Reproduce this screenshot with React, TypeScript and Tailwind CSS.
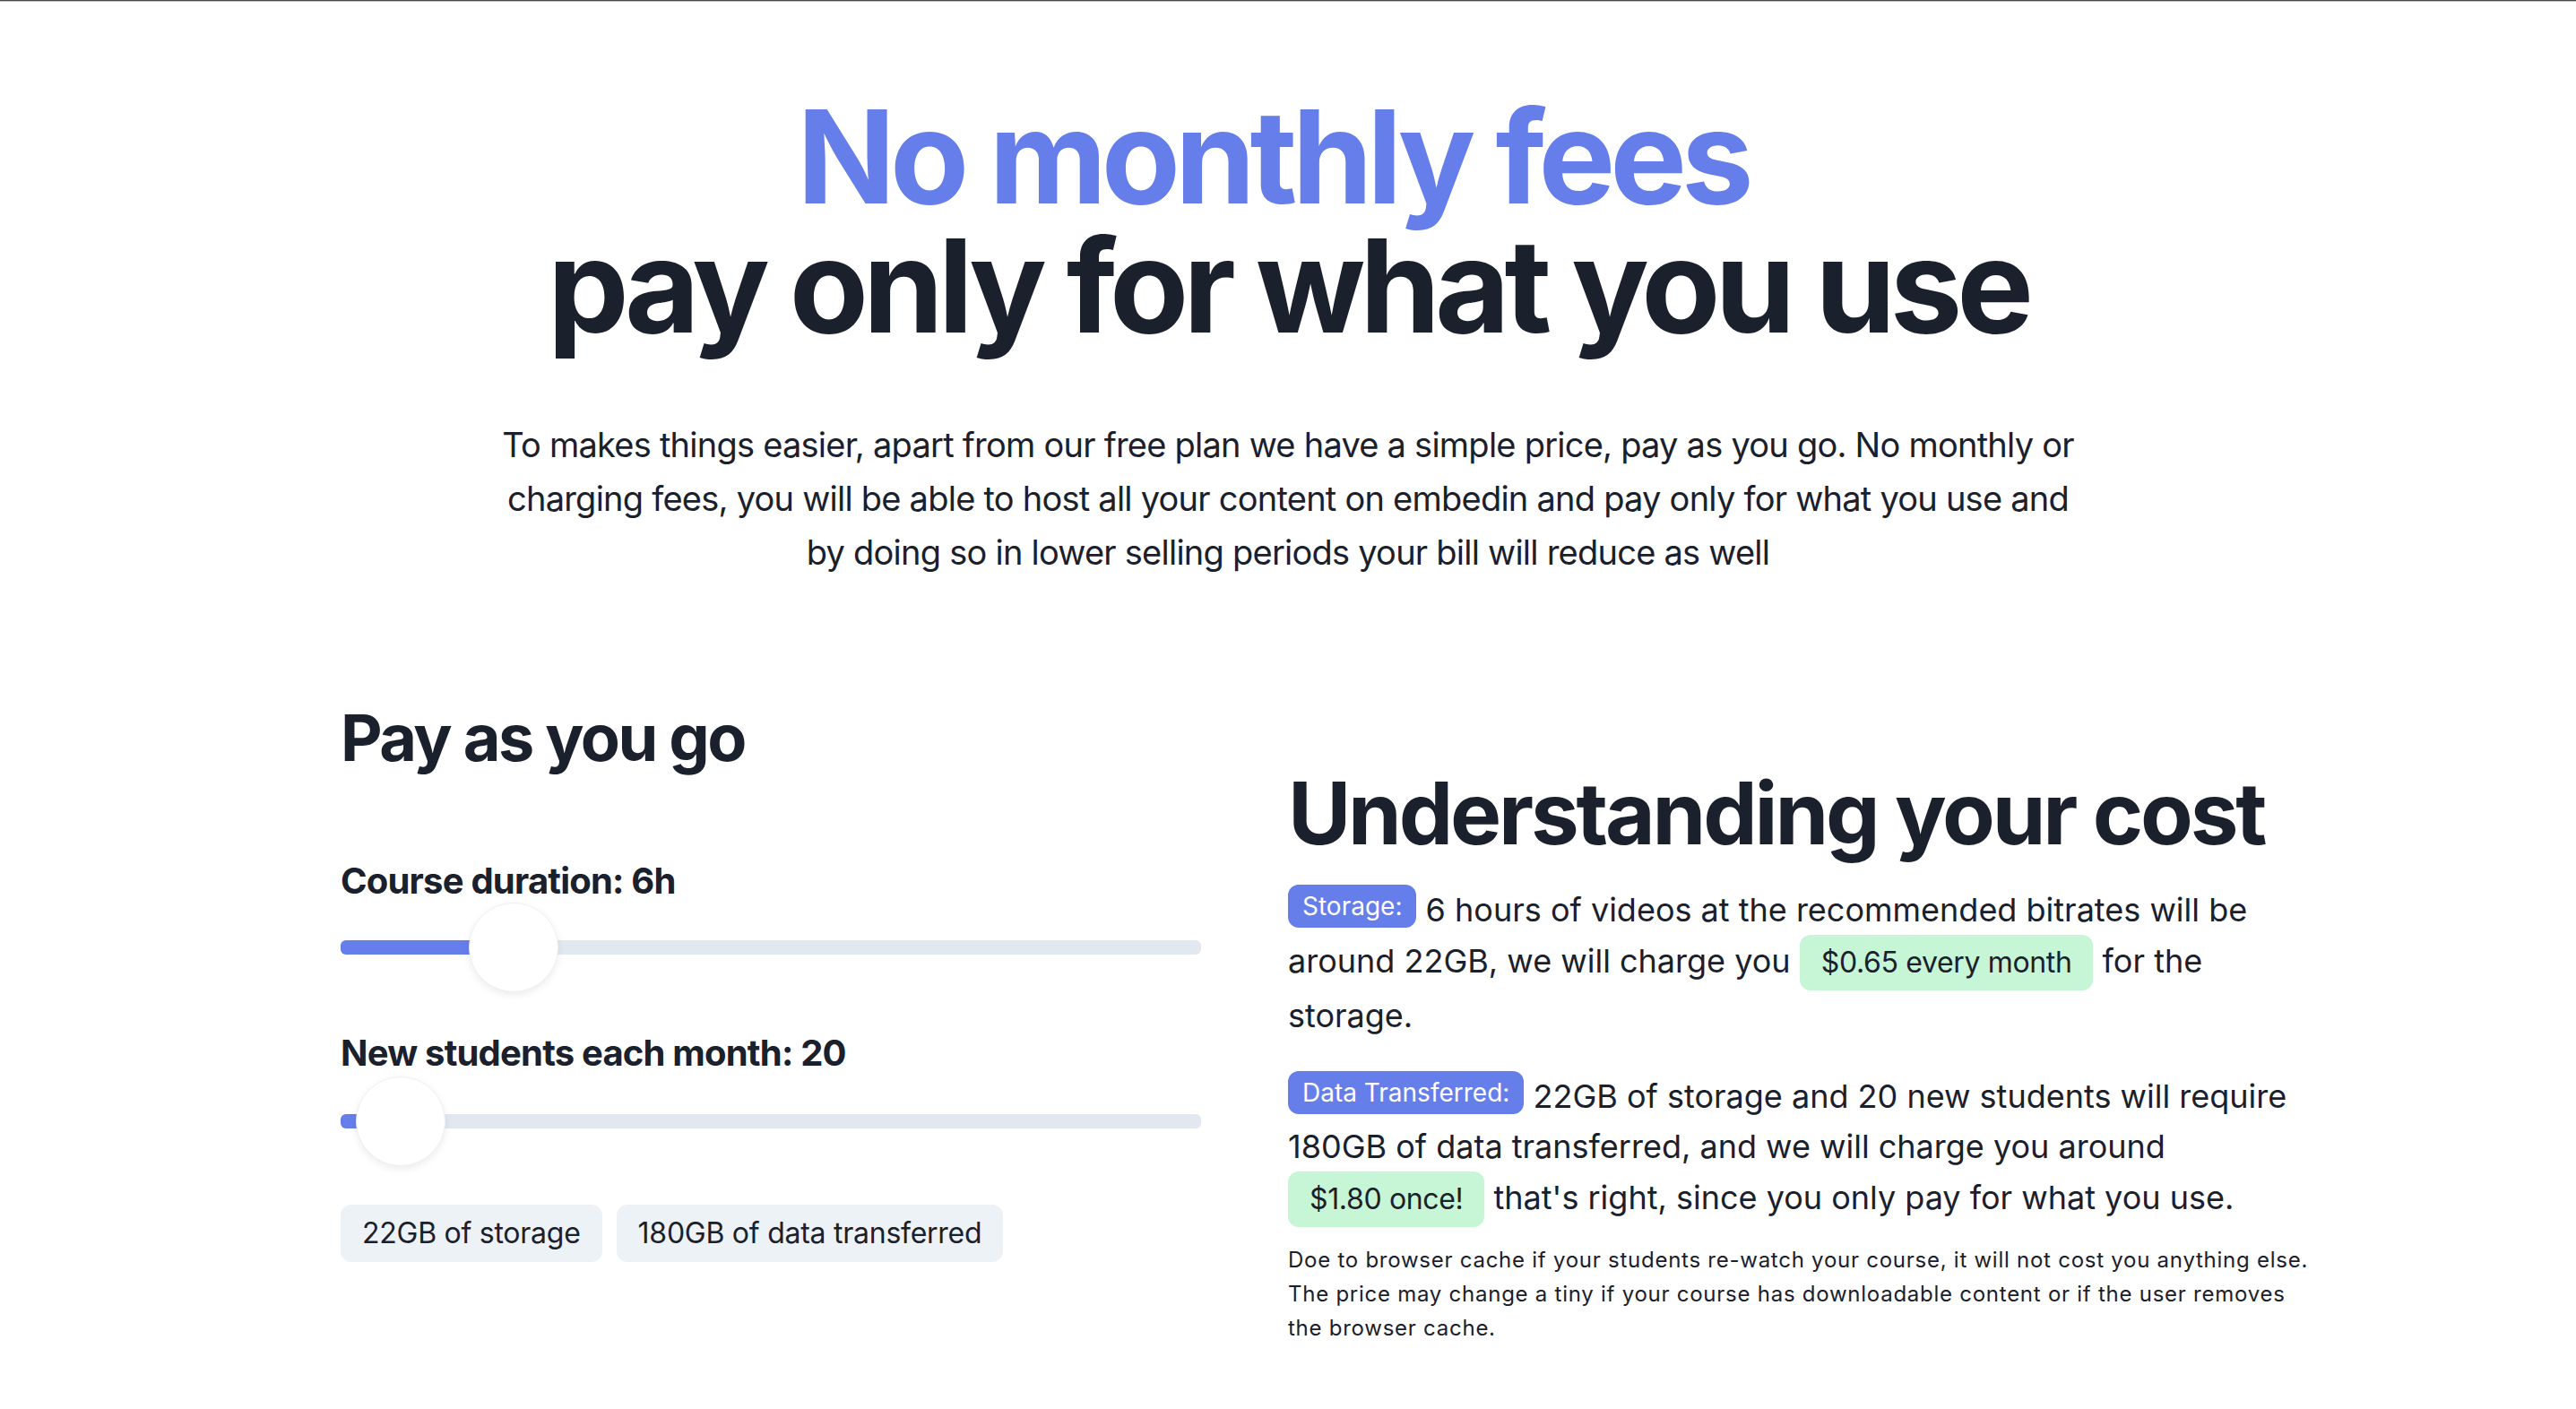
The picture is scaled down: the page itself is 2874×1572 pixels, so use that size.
import { useState } from "react";

type SliderProps = {
  value: number;
  min: number;
  max: number;
  onChange: (v: number) => void;
};

function Slider({ value, min, max, onChange }: SliderProps) {
  const pct = (value - min) / (max - min);
  return (
    <div className="relative h-[100px]">
      <div className="absolute inset-x-0 top-[42px] h-4 rounded-[6px] bg-[#e2e8f0]" />
      <div
        className="absolute left-0 top-[42px] h-4 rounded-l-[6px] bg-[#667eea]"
        style={{ width: `calc(${pct} * (100% - 100px) + 50px)` }}
      />
      <div
        className="absolute top-0 size-[100px] rounded-full border border-[#eef0f3] bg-white shadow-[0_3px_8px_rgba(0,0,0,0.08)]"
        style={{ left: `calc(${pct} * (100% - 100px))` }}
      />
      <input
        type="range"
        min={min}
        max={max}
        value={value}
        onChange={(e) => onChange(Number(e.target.value))}
        className="absolute inset-0 h-full w-full cursor-pointer opacity-0"
      />
    </div>
  );
}

function Badge({ children }: { children: React.ReactNode }) {
  return (
    <span className="inline-block rounded-[12px] bg-[#667eea] px-[16px] py-[4px] align-top text-[28px] leading-[40px] text-white">
      {children}
    </span>
  );
}

function Price({ children }: { children: React.ReactNode }) {
  return (
    <span className="inline-block rounded-[12px] bg-[#c6f6d5] px-[24px] py-[7px] text-[32px] leading-[48px] tracking-[-0.011em]">
      {children}
    </span>
  );
}

export default function App() {
  const [hours, setHours] = useState(6);
  const [students, setStudents] = useState(20);

  const storage = Math.round(hours * 3.7);
  const transfer = Math.round(storage * students * 0.41);
  const storageCost = (storage * 0.0295).toFixed(2);
  const transferCost = (transfer * 0.01).toFixed(2);

  return (
    <div className="min-h-screen bg-white font-[Inter,sans-serif] text-[#1a202c]">
      <div className="h-px bg-[#4a4a4a]" />
      <div className="h-px bg-[#c4c4c4]" />

      <header className="pt-[101px] text-center">
        <h1 className="text-[144px] leading-[144px] font-bold tracking-[-0.042em]">
          <span className="block pr-[34px] text-[#667eea]">No monthly fees</span>
          <span className="block">pay only for what you use</span>
        </h1>
        <p className="mx-auto mt-[75px] w-[1792px] text-[38px] leading-[60px] tracking-[-0.02em]">
          To makes things easier, apart from our free plan we have a simple price, pay as you go. No monthly or
          charging fees, you will be able to host all your content on embedin and pay only for what you use and by
          doing so in lower selling periods your bill will reduce as well
        </p>
      </header>

      <section className="mt-[137px] flex items-start gap-[97px] pl-[380px] pb-[60px]">
        <div className="w-[960px] shrink-0">
          <h2 className="text-[72px] leading-[80px] font-bold tracking-[-0.035em]">Pay as you go</h2>

          <div className="mt-[92px] text-[40px] leading-[56px] font-bold tracking-[-0.02em]">
            Course duration: {hours}h
          </div>
          <div className="-mt-[4px]">
            <Slider value={hours} min={1} max={31} onChange={setHours} />
          </div>

          <div className="mt-[40px] text-[40px] leading-[56px] font-bold tracking-[-0.02em]">
            New students each month: {students}
          </div>
          <div className="-mt-[2px]">
            <Slider value={students} min={0} max={1000} onChange={setStudents} />
          </div>

          <div className="mt-[43px] flex gap-[16px] text-[32px] leading-[48px] tracking-[-0.008em]">
            <span className="rounded-[12px] bg-[#edf2f7] px-[24px] py-[8px]">{storage}GB of storage</span>
            <span className="rounded-[12px] bg-[#edf2f7] px-[24px] py-[8px]">{transfer}GB of data transferred</span>
          </div>
        </div>

        <div className="mt-[76px] w-[1145px] shrink-0">
          <h2 className="text-[96px] leading-[96px] font-bold tracking-[-0.033em]">Understanding your cost</h2>

          <p className="mt-[32px] text-[36px] leading-[56px]">
            <Badge>Storage:</Badge> {hours} hours of videos at the recommended bitrates will be around {storage}GB, we
            will charge you <Price>${storageCost} every month</Price> for the storage.
          </p>

          <p className="mt-[34px] text-[36px] leading-[56px]">
            <Badge>Data Transferred:</Badge> {storage}GB of storage and {students} new students will require{" "}
            {transfer}GB of data transferred, and we will charge you around <Price>${transferCost} once!</Price>{" "}
            that's right, since you only pay for what you use.
          </p>

          <p className="mt-[18px] text-[24px] leading-[38px] tracking-[0.031em]">
            Doe to browser cache if your students re-watch your course, it will not cost you anything else. The price
            may change a tiny if your course has downloadable content or if the user removes the browser cache.
          </p>
        </div>
      </section>
    </div>
  );
}
